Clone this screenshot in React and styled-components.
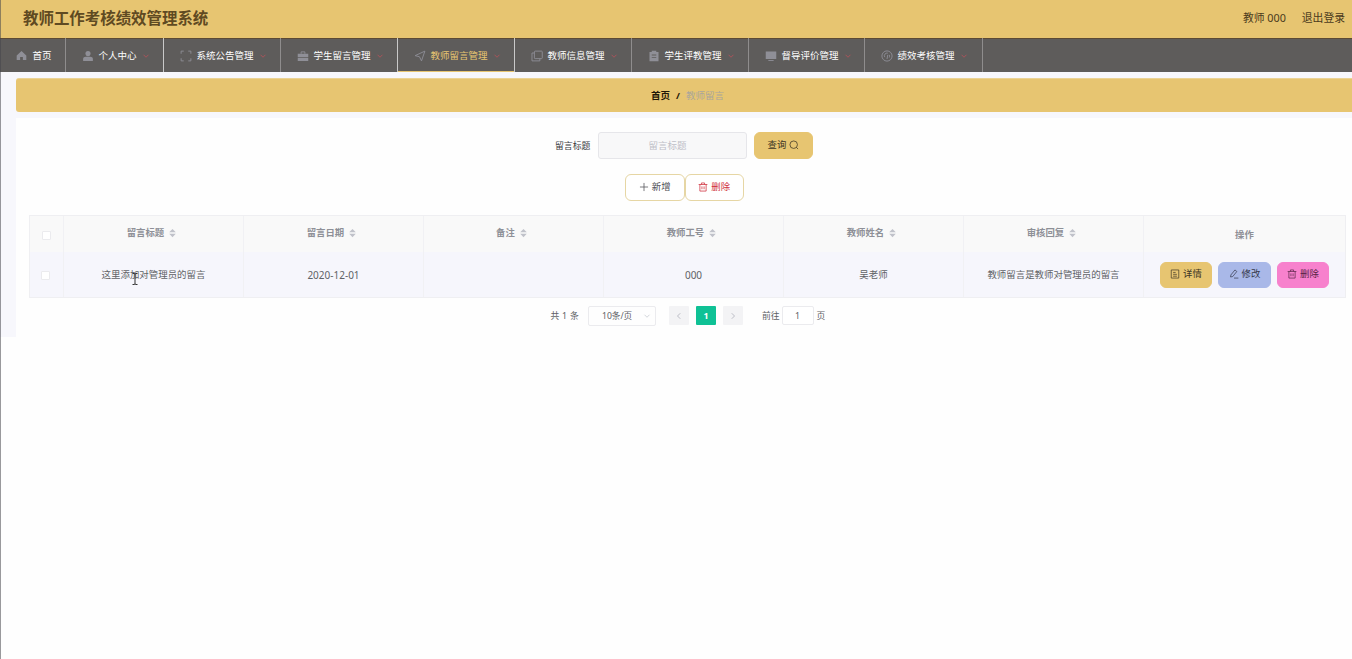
import React from "react";
import styled, { createGlobalStyle, css } from "styled-components";

const Global = createGlobalStyle`
  *, *::before, *::after { box-sizing: border-box; }
  body { margin: 0; background: #fefefe; font-family: "Noto Sans", "Noto Sans CJK SC", sans-serif; font-size: 9.4px; color: #606266; }
  button, input { font: inherit; margin: 0; }
`;

const Page = styled.div`
  position: relative;
  height: 659px;
  overflow: hidden;
  &::after { content: ""; position: absolute; left: 0; top: 0; bottom: 0; width: 1px; background: rgba(70, 70, 75, 0.55); }
`;
const TopBar = styled.header`
  height: 38px;
  padding: 0 7px 2px 23px;
  display: flex;
  align-items: center;
  background: #e7c571;
  color: #4a3a1c;
`;
const Title = styled.h1`
  margin: 0;
  flex: 1;
  font-size: 15.45px;
  line-height: 24px;
  font-weight: 700;
  color: #5f4a22;
`;
const UserLinks = styled.div`
  display: flex;
  gap: 16px;
  font-size: 10.8px;
  line-height: 16px;
`;
const Nav = styled.nav`
  height: 34px;
  display: flex;
  background: #5e5c5b;
  box-shadow: inset 0 1px 0 #5c4a35;
`;
const NavItem = styled.a`
  width: ${(p) => p.$w}px;
  height: 34px;
  padding: 1px 0 0 ${(p) => p.$pad || 15.5}px;
  display: flex;
  align-items: center;
  border-right: 1px solid ${(p) => (p.$bright ? "#c9c9c9" : "#8f8d8d")};
  color: ${(p) => (p.$active ? "#e7c571" : "#ffffff")};
  font-size: 9.5px;
  line-height: 14px;
  white-space: nowrap;
  ${(p) => p.$active && css`box-shadow: inset 0 -1px 0 #e7c571;`}
`;
const NavIcon = styled.span`
  display: flex;
  margin-right: ${(p) => p.$gap || 5}px;
  color: #8f8f97;
`;
const Arrow = styled.span`
  display: flex;
  margin-left: 5px;
  color: #a9535a;
`;
const Main = styled.main`
  height: 265px;
  padding: 6px 0 0 16px;
  background: #f7f7fc;
`;
const Breadcrumb = styled.div`
  height: 34px;
  padding-left: 7px;
  display: flex;
  align-items: center;
  justify-content: center;
  gap: 6px;
  border-radius: 3px 0 0 3px;
  background: #e7c571;
  border-top: 1px solid #ebd396;
  font-size: 9.5px;
  line-height: 14px;
`;
const Crumb = styled.span`
  font-weight: ${(p) => (p.$current ? 400 : 700)};
  color: ${(p) => (p.$current ? "#aaa59c" : "#1f1708")};
`;
const Card = styled.section`
  margin-top: 6px;
  height: 219px;
  padding: 14px 6px 0 13px;
  background: #fefefe;
`;
const SearchRow = styled.form`
  display: flex;
  align-items: center;
  padding-left: 526px;
  height: 27px;
`;
const Label = styled.label`
  width: 43px;
  color: #3a3a3e;
  font-size: 8.9px;
`;
const SearchInput = styled.input`
  width: 149px;
  height: 27px;
  margin-right: 7px;
  padding: 0 10px 1px 0;
  border: 1px solid #e6e6ea;
  border-radius: 3px;
  background: #f8f8f9;
  text-align: center;
  font-size: 9.5px;
  outline: none;
  &::placeholder { color: #bfc0c8; opacity: 1; }
`;
const Button = styled.button`
  width: ${(p) => p.$w || 59.5}px;
  height: ${(p) => p.$h || 27}px;
  padding: 0 0 1px;
  display: flex;
  align-items: center;
  justify-content: center;
  gap: 3px;
  border: 1px solid ${(p) => p.$border || p.$bg};
  border-radius: 6px;
  background: ${(p) => p.$bg || "#fff"};
  color: ${(p) => p.$color || "#3d3524"};
  font-size: 9.4px;
  line-height: 14px;
  white-space: nowrap;
`;
const ActionRow = styled.div`
  display: flex;
  margin-top: 15px;
  padding-left: 596px;
`;
const Table = styled.div`
  margin-top: 14px;
  width: 1317px;
  border: 1px solid #efeff2;
`;
const Row = styled.div`
  display: grid;
  grid-template-columns: 34px repeat(6, 180px) 1fr;
  height: ${(p) => (p.$head ? 36 : 45)}px;
  background: ${(p) => (p.$head ? "#f9f9f9" : "#f6f6fc")};
  color: ${(p) => (p.$head ? "#8e9097" : "#606266")};
  font-weight: ${(p) => (p.$head ? 700 : 400)};
`;
const Cell = styled.div`
  display: flex;
  align-items: center;
  justify-content: center;
  gap: ${(p) => p.$gap || 5}px;
  padding-bottom: ${(p) => p.$lift || 0}px;
  padding-top: ${(p) => p.$drop || 0}px;
  padding-right: ${(p) => p.$shift || 0}px;
  font-size: ${(p) => p.$size || 9.4}px;
  line-height: 14px;
  border-right: 1px solid #f1f1f4;
  &:last-child { border-right: 0; }
`;
const Check = styled.span`
  width: 9px;
  height: 9px;
  border: 1px solid #ebebee;
  border-radius: 1px;
  background: #fff;
`;
const Pager = styled.div`
  display: flex;
  align-items: center;
  margin-top: 8px;
  padding-left: 521.500px;
  height: 19px;
  font-size: 8.8px;
  line-height: 14px;
  color: #606266;
`;
const Total = styled.span`
  width: 37.500px;
  white-space: nowrap;
  word-spacing: 0.5px;
`;
const SizeSelect = styled.div`
  width: 68px;
  height: 20px;
  margin-right: 13px;
  padding: 0 4px 0 13px;
  display: flex;
  align-items: center;
  justify-content: space-between;
  border: 1px solid #ebebee;
  border-radius: 2px;
  font-size: 8.600px;
  color: #606266;
  svg { color: #c0c4cc; }
`;
const PageButton = styled.button`
  width: 20px;
  height: 19px;
  margin-right: 7px;
  padding: 0;
  display: flex;
  align-items: center;
  justify-content: center;
  border: 0;
  border-radius: 1px;
  background: ${(p) => (p.$active ? "#0fc195" : "#f3f3f5")};
  color: ${(p) => (p.$active ? "#fff" : "#b4b6be")};
  font-weight: 700;
`;
const Jump = styled.label`
  display: flex;
  align-items: center;
  gap: 2px;
  margin-left: 12px;
`;
const JumpInput = styled.input`
  width: 32px;
  height: 19px;
  margin-right: 1px;
  padding: 0;
  border: 1px solid #ebebee;
  border-radius: 2px;
  background: #fff;
  text-align: center;
  color: #606266;
`;
const Cursor = styled.svg`
  position: absolute;
  left: 131px;
  top: 273px;
`;

const shapes = {
  home: <path fill="currentColor" stroke="none" fillRule="evenodd" d="M8 1.500 1 8v6.500h5V10h4v4.500h5V8z" />,
  user: <><circle cx="8" cy="4.8" r="3.4" fill="currentColor" stroke="none" /><path fill="currentColor" stroke="none" d="M1.5 14.5V12c0-2 1.5-3 3.500-3h6c2 0 3.500 1 3.500 3v2.500z" /></>,
  frame: <path d="M1.500 5V1.500H5M11 1.500h3.500V5M14.500 11v3.500H11M5 14.500H1.500V11" />,
  bag: <><path fill="currentColor" stroke="none" d="M1 5h14v4.300H1zM1 10.300h14v4.200H1z" /><path d="M5.500 5V2.500h5V5" /></>,
  send: <path d="M1.500 7.500 14.500 1.500 10 14.500 7.300 9z" />,
  copy: <><rect x="4.500" y="1.500" width="10.500" height="10" rx="1" /><path d="M4.500 4H1.300v10.500h10.500v-3" /></>,
  clipboard: <path fill="currentColor" stroke="none" fillRule="evenodd" d="M2 2.500h3V1h6v1.500h3V15H2zM5 6v1.200h6V6zm0 3.500v1.200h6V9.500z" />,
  monitor: <><rect x="1" y="2" width="14" height="10" fill="currentColor" stroke="none" /><path d="M4.500 14h7" /></>,
  gauge: <><circle cx="8" cy="8" r="6.800" /><path d="M5 9.500a3.600 3.600 0 0 1 4-5.300M11 6.500a4 4 0 0 1 0 3.500M8 12l1-5.500" /></>,
  down: <path d="m3 5.500 5 5 5-5" />,
  left: <path d="m10.500 2.500-5.500 5.500 5.500 5.500" />,
  right: <path d="m5.500 2.500 5.500 5.500-5.500 5.500" />,
  search: <><circle cx="7.500" cy="7.500" r="6" /><path d="m11.800 11.800 2.700 2.700" /></>,
  plus: <path d="M8 1.500v13M1.500 8h13" />,
  trash: <path d="M1 4h14M5.500 4V1.500h5V4M3 4v10.500h10V4M6.300 7v4.500M9.700 7v4.500" />,
  doc: <path d="M2 1.500h12v13H2zM5 5.500h4M5 8.500h6M5 11.500h6" />,
  edit: <path d="m3 9.500 6.500-8 3 2.500-6.500 8-3.500.800zM8 14.500h7" />,
};

const Icon = ({ name, size = 10, weight = 1.4 }) => (
  <svg width={size} height={size} viewBox="0 0 16 16" fill="none" stroke="currentColor" strokeWidth={weight} style={{ flex: "none" }}>
    {shapes[name]}
  </svg>
);
const Sort = () => (
  <svg width="7" height="10" viewBox="0 0 7 10" fill="#c0c2ca"><path d="M3.500 1 6.800 4.300H.2zM3.500 9.200 6.800 5.800H.2z" /></svg>
);

const menus = [
  ["user", "个人中心", 98],
  ["frame", "系统公告管理", 117],
  ["bag", "学生留言管理", 117],
  ["send", "教师留言管理", 117],
  ["copy", "教师信息管理", 117],
  ["clipboard", "学生评教管理", 117],
  ["monitor", "督导评价管理", 116],
  ["gauge", "绩效考核管理", 118],
];
const columns = ["留言标题", "留言日期", "备注", "教师工号", "教师姓名", "审核回复"];
const record = ["这里添加对管理员的留言", "2020-12-01", "", "000", "吴老师", "教师留言是教师对管理员的留言"];

export default function App() {
  return (
    <Page>
      <Global />
      <TopBar>
        <Title>教师工作考核绩效管理系统</Title>
        <UserLinks><span>教师 000</span><span>退出登录</span></UserLinks>
      </TopBar>
      <Nav>
        <NavItem $w={66}><NavIcon $gap={6}><Icon name="home" size={11} /></NavIcon>首页</NavItem>
        {menus.map(([icon, text, w]) => (
          <NavItem key={text} $w={w} $active={icon === "send"} $bright={["user", "bag", "send"].includes(icon)}>
            <NavIcon><Icon name={icon} size={12} weight={1.2} /></NavIcon>
            {text}
            <Arrow><Icon name="down" size={8} weight={2} /></Arrow>
          </NavItem>
        ))}
      </Nav>
      <Main>
        <Breadcrumb>
          <Crumb>首页</Crumb><Crumb>/</Crumb><Crumb $current>教师留言</Crumb>
        </Breadcrumb>
        <Card>
          <SearchRow>
            <Label>留言标题</Label>
            <SearchInput placeholder="留言标题" />
            <Button type="button" $bg="#e7c571" $w={59}>查询<Icon name="search" weight={1.2} /></Button>
          </SearchRow>
          <ActionRow>
            <Button $border="#e6d6a4" $color="#505055"><Icon name="plus" weight={1.2} />新增</Button>
            <Button $border="#e6d6a4" $color="#cf2f3c"><Icon name="trash" weight={1.2} />删除</Button>
          </ActionRow>
          <Table>
            <Row $head>
              <Cell $drop={2}><Check /></Cell>
              {columns.map((c) => <Cell key={c} $lift={2} $shift={4}>{c}<Sort /></Cell>)}
              <Cell $drop={1}>操作</Cell>
            </Row>
            <Row>
              <Cell $drop={1} $shift={2}><Check /></Cell>
              {record.map((v, i) => <Cell key={i} $size={/\d/.test(v) ? 10 : 9.45}>{v}</Cell>)}
              <Cell $gap={6}>
                <Button $w={52.5} $h={26} $bg="#e7c571"><Icon name="doc" weight={1.1} />详情</Button>
                <Button $w={52.5} $h={26} $bg="#a9b8e8" $color="#34384a"><Icon name="edit" weight={1.1} />修改</Button>
                <Button $w={52.5} $h={26} $bg="#f781cd" $color="#552344"><Icon name="trash" weight={1.1} />删除</Button>
              </Cell>
            </Row>
          </Table>
          <Pager>
            <Total>共 1 条</Total>
            <SizeSelect>10条/页<Icon name="down" size={8} /></SizeSelect>
            <PageButton><Icon name="left" size={8} weight={1.8} /></PageButton>
            <PageButton $active>1</PageButton>
            <PageButton><Icon name="right" size={8} weight={1.8} /></PageButton>
            <Jump>前往<JumpInput defaultValue="1" />页</Jump>
          </Pager>
        </Card>
      </Main>
      <Cursor width="8" height="12" viewBox="0 0 8 12" fill="none" stroke="#333" strokeWidth="1">
        <path d="M1.500.5h2l.5 1 .5-1h2M4 1.500v9M1.500 11.500h2l.5-1 .5 1h2" />
      </Cursor>
    </Page>
  );
}
